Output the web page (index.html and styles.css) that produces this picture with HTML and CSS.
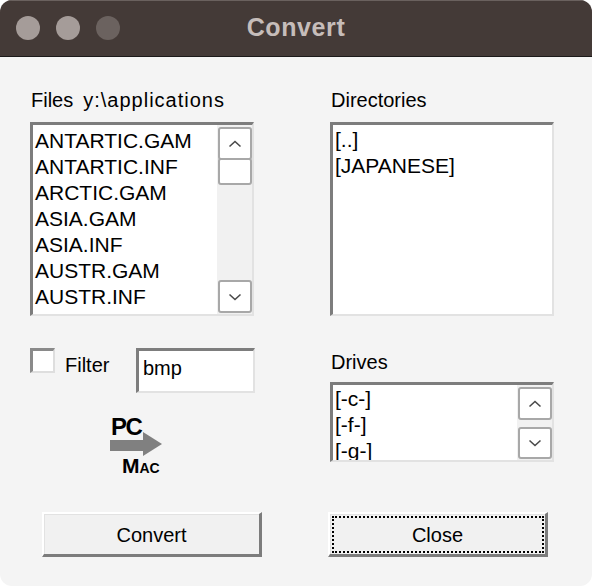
FILE: index.html
```html
<!DOCTYPE html>
<html>
<head>
<meta charset="utf-8">
<title>Convert</title>
<link rel="stylesheet" href="styles.css">
</head>
<body>
<div class="window">
  <header class="titlebar">
    <div class="lights">
      <span class="light"></span>
      <span class="light"></span>
      <span class="light dim"></span>
    </div>
    <div class="title">Convert</div>
    <div class="spacer"></div>
  </header>
  <main class="content">
    <div class="columns">
      <section class="col">
        <div class="label">Files<span class="path">y:\applications</span></div>
        <div class="listbox files">
          <ul class="items">
            <li>ANTARTIC.GAM</li>
            <li>ANTARTIC.INF</li>
            <li>ARCTIC.GAM</li>
            <li>ASIA.GAM</li>
            <li>ASIA.INF</li>
            <li>AUSTR.GAM</li>
            <li>AUSTR.INF</li>
            <li>BAHAMA.GAM</li>
          </ul>
          <div class="scrollbar">
            <span class="sbtn"><svg width="14" height="8" viewBox="0 0 14 8"><polyline points="1.5,6.5 7,1.5 12.5,6.5" fill="none" stroke="#4a4a4a" stroke-width="1.6"/></svg></span>
            <span class="thumb"></span>
            <span class="track"></span>
            <span class="sbtn"><svg width="14" height="8" viewBox="0 0 14 8"><polyline points="1.5,1.5 7,6.5 12.5,1.5" fill="none" stroke="#4a4a4a" stroke-width="1.6"/></svg></span>
          </div>
        </div>
        <div class="filter-row">
          <span class="checkbox"></span>
          <span class="filter-label">Filter</span>
          <div class="textbox">bmp</div>
        </div>
        <div class="logo">
          <div class="logo-pc">PC</div>
          <svg class="logo-arrow" width="54" height="26" viewBox="0 0 54 26"><rect x="0" y="9" width="35" height="11" fill="#808080"/><polygon points="33,1 52,13 33,25" fill="#808080"/></svg>
          <div class="logo-mac">M<span class="small">AC</span></div>
        </div>
      </section>
      <section class="col">
        <div class="label">Directories</div>
        <div class="listbox dirs">
          <ul class="items">
            <li>[..]</li>
            <li>[JAPANESE]</li>
          </ul>
        </div>
        <div class="label drives-label">Drives</div>
        <div class="listbox drives">
          <ul class="items">
            <li>[-c-]</li>
            <li>[-f-]</li>
            <li>[-g-]</li>
          </ul>
          <div class="scrollbar short">
            <span class="sbtn"><svg width="14" height="8" viewBox="0 0 14 8"><polyline points="1.5,6.5 7,1.5 12.5,6.5" fill="none" stroke="#4a4a4a" stroke-width="1.6"/></svg></span>
            <span class="sbtn"><svg width="14" height="8" viewBox="0 0 14 8"><polyline points="1.5,1.5 7,6.5 12.5,1.5" fill="none" stroke="#4a4a4a" stroke-width="1.6"/></svg></span>
          </div>
        </div>
      </section>
    </div>
    <div class="buttons">
      <button class="btn">Convert</button>
      <button class="btn focused">Close</button>
    </div>
  </main>
</div>
</body>
</html>
```
FILE: styles.css
```css
html, body {
  margin: 0;
  padding: 0;
  background: #ffffff;
}

.window {
  width: 592px;
  height: 586px;
  border-radius: 12px;
  overflow: hidden;
  background: #f4f4f4;
  font-family: "Liberation Sans", Arial, sans-serif;
  color: #000;
}

.titlebar {
  box-sizing: border-box;
  height: 57px;
  background: #443a37;
  border-bottom: 1px solid #1c1a1a;
  box-shadow: inset 0 1px 0 #6a615e;
  display: grid;
  grid-template-columns: 1fr auto 1fr;
  align-items: center;
}

.lights {
  display: flex;
  gap: 16px;
  padding-left: 16px;
}

.light {
  width: 24px;
  height: 24px;
  border-radius: 50%;
  background: #a59c99;
}

.light.dim {
  background: #6b625f;
}

.title {
  font-weight: bold;
  font-size: 25px;
  letter-spacing: 0.6px;
  color: #c6bdba;
  line-height: 30px;
  padding-bottom: 3px;
}

.content {
  padding: 31px 0 0 30px;
}

.columns {
  display: grid;
  grid-template-columns: 224px 224px;
  column-gap: 76px;
  align-items: start;
}

.col {
  display: flex;
  flex-direction: column;
}

.label {
  font-size: 20px;
  line-height: 24px;
  height: 24px;
  padding-left: 1px;
  margin-bottom: 10px;
  white-space: nowrap;
}

.path {
  margin-left: 10px;
  letter-spacing: 1px;
}

.drives-label {
  margin-top: 34px;
  margin-bottom: 8px;
}

.listbox {
  box-sizing: border-box;
  display: flex;
  background: #ffffff;
  border-top: 3px solid #7d7d7d;
  border-left: 3px solid #7d7d7d;
  border-right: 2px solid #e2e2e2;
  border-bottom: 2px solid #e2e2e2;
  overflow: hidden;
}

.listbox.files,
.listbox.dirs {
  height: 194px;
}

.listbox.drives {
  height: 80px;
}

.items {
  flex: 1;
  list-style: none;
  margin: 0;
  padding: 2px 0 0 2px;
  font-size: 21px;
  line-height: 26px;
  overflow: hidden;
  white-space: nowrap;
}

.files .items {
  padding-top: 3px;
}

.drives .items {
  padding-top: 1px;
}

.scrollbar {
  box-sizing: border-box;
  width: 35px;
  padding: 2px 0 1px 1px;
  background: #f1f1f1;
  display: flex;
  flex-direction: column;
}

.scrollbar.short {
  justify-content: space-between;
}

.sbtn {
  box-sizing: border-box;
  width: 34px;
  height: 33px;
  background: #ffffff;
  border: 2px solid #a8a8a8;
  border-radius: 3px;
  display: flex;
  align-items: center;
  justify-content: center;
}

.short .sbtn:last-child {
  height: 32px;
}

.thumb {
  box-sizing: border-box;
  width: 34px;
  height: 27px;
  margin-top: -2px;
  background: #ffffff;
  border: 2px solid #a8a8a8;
  border-radius: 3px;
}

.track {
  flex: 1;
}

.filter-row {
  display: flex;
  align-items: flex-start;
  margin-top: 32px;
  height: 45px;
}

.checkbox {
  box-sizing: border-box;
  width: 25px;
  height: 25px;
  flex-shrink: 0;
  background: #ffffff;
  border-top: 3px solid #8a8a8a;
  border-left: 3px solid #8a8a8a;
  border-right: 2px solid #dedede;
  border-bottom: 2px solid #dedede;
}

.filter-label {
  font-size: 20px;
  line-height: 24px;
  margin-top: 5px;
  margin-left: 10px;
}

.textbox {
  box-sizing: border-box;
  flex-shrink: 0;
  width: 119px;
  height: 45px;
  margin-left: auto;
  margin-right: -1px;
  background: #ffffff;
  border-top: 3px solid #7d7d7d;
  border-left: 3px solid #7d7d7d;
  border-right: 2px solid #e2e2e2;
  border-bottom: 2px solid #e2e2e2;
  padding: 5px 0 0 4px;
  font-size: 20px;
  line-height: 24px;
}

.logo {
  margin-top: 24px;
  margin-left: 81px;
  display: flex;
  flex-direction: column;
  align-items: flex-start;
  font-weight: bold;
}

.logo-pc {
  font-size: 24px;
  line-height: 20px;
  height: 20px;
  letter-spacing: -1.5px;
}

.logo-arrow {
  display: block;
  margin-top: -6px;
  margin-left: -1px;
}

.logo-mac {
  font-size: 21px;
  line-height: 18px;
  height: 18px;
  padding-left: 11px;
}

.logo-mac .small {
  font-size: 14px;
}

.buttons {
  display: flex;
  gap: 66px;
  margin-top: 37px;
  margin-left: 12px;
}

.btn {
  box-sizing: border-box;
  width: 220px;
  height: 45px;
  margin: 0;
  padding: 2px 0 0 0;
  background: #f1f1f1;
  border-top: 2px solid #ffffff;
  border-left: 2px solid #ffffff;
  border-right: 3px solid #7c7c7c;
  border-bottom: 3px solid #7c7c7c;
  box-shadow: inset 1px 1px 0 #e2e2e2;
  border-radius: 0;
  font-family: "Liberation Sans", Arial, sans-serif;
  font-size: 20px;
  line-height: 24px;
  color: #000;
}

.btn.focused {
  outline: 2px dotted #000000;
  outline-offset: -6px;
}
```
